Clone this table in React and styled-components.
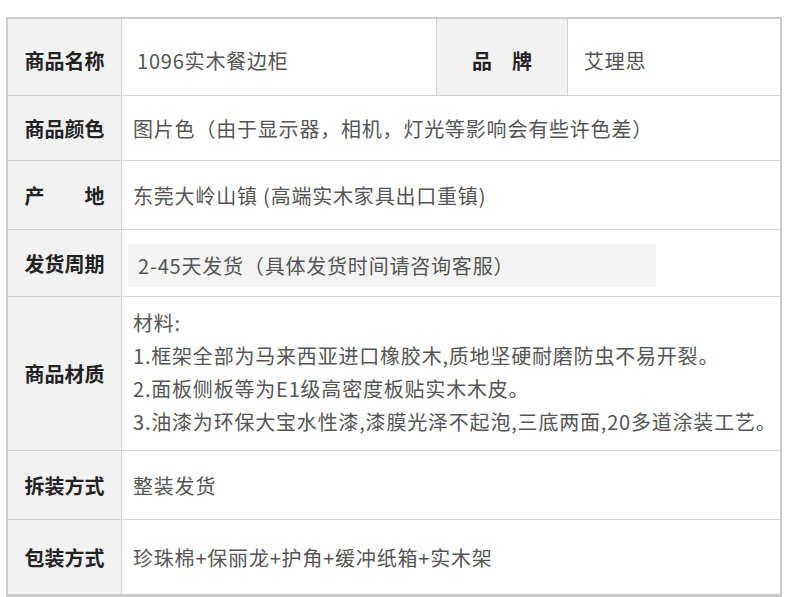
import React from "react";
import styled, { createGlobalStyle } from "styled-components";

const GlobalStyle = createGlobalStyle`
  html, body {
    margin: 0;
    padding: 0;
    background: #ffffff;
  }
  body {
    font-family: "Noto Sans CJK SC", "Liberation Sans", sans-serif;
  }
`;

const rows = [
  { label: "商品颜色", value: "图片色（由于显示器，相机，灯光等影响会有些许色差）", height: 65 },
  { label: "产　　地", value: "东莞大岭山镇 (高端实木家具出口重镇)", height: 69 },
  { label: "发货周期", value: "2-45天发货（具体发货时间请咨询客服）", height: 67, boxed: true },
  {
    label: "商品材质",
    lines: [
      "材料:",
      "1.框架全部为马来西亚进口橡胶木,质地坚硬耐磨防虫不易开裂。",
      "2.面板侧板等为E1级高密度板贴实木木皮。",
      "3.油漆为环保大宝水性漆,漆膜光泽不起泡,三底两面,20多道涂装工艺。",
    ],
    height: 154,
  },
  { label: "拆装方式", value: "整装发货", height: 69 },
  { label: "包装方式", value: "珍珠棉+保丽龙+护角+缓冲纸箱+实木架", height: 74 },
];

export default function App() {
  return (
    <>
      <GlobalStyle />
      <Page>
        <Table>
          <Label $h={77} $top={6}>商品名称</Label>
          <Value $top={6} $pad={15}>1096实木餐边柜</Value>
          <Label $h={77} $top={6} $border>品　牌</Label>
          <Value $top={6} $pad={16}>艾理思</Value>

          {rows.map((row) => (
            <React.Fragment key={row.label}>
              <Label $h={row.height}>{row.label}</Label>
              <Value $span>
                {row.boxed ? (
                  <Shaded>{row.value}</Shaded>
                ) : row.lines ? (
                  <Lines>
                    {row.lines.map((line) => (
                      <div key={line}>{line}</div>
                    ))}
                  </Lines>
                ) : (
                  row.value
                )}
              </Value>
            </React.Fragment>
          ))}
        </Table>
      </Page>
    </>
  );
}

const Page = styled.div`
  padding: 17px 7px 0 6px;
`;

const Table = styled.div`
  display: grid;
  grid-template-columns: 114px 314px 132px 1fr;
  width: 776px;
  box-sizing: border-box;
  border: 2px solid #cbcbcb;
  border-bottom-width: 3px;
  background: #ffffff;
`;

const Label = styled.div`
  box-sizing: border-box;
  height: ${(p) => p.$h}px;
  padding-top: ${(p) => p.$top || 0}px;
  display: flex;
  align-items: center;
  justify-content: center;
  background: #f2f2f2;
  border-right: 1px solid #d2d2d2;
  border-left: ${(p) => (p.$border ? "1px solid #d2d2d2" : "none")};
  border-bottom: 1px solid #d2d2d2;
  font-size: 20px;
  font-weight: 700;
  color: #222222;
  white-space: nowrap;

  &:nth-last-child(2) {
    border-bottom: none;
  }
`;

const Value = styled.div`
  box-sizing: border-box;
  grid-column: ${(p) => (p.$span ? "2 / -1" : "auto")};
  padding: ${(p) => p.$top || 0}px 0 0 ${(p) => p.$pad || 11}px;
  display: flex;
  align-items: center;
  border-bottom: 1px solid #d2d2d2;
  font-size: 20px;
  letter-spacing: 0.8px;
  color: #555555;
  white-space: nowrap;

  &:last-child {
    border-bottom: none;
  }
`;

const Shaded = styled.div`
  width: 528px;
  height: 43px;
  margin: 4px 0 0 -5px;
  padding-left: 10px;
  box-sizing: border-box;
  display: flex;
  align-items: center;
  background: #f3f3f3;
`;

const Lines = styled.div`
  display: flex;
  flex-direction: column;
  line-height: 33px;
  margin-top: -3px;
`;
